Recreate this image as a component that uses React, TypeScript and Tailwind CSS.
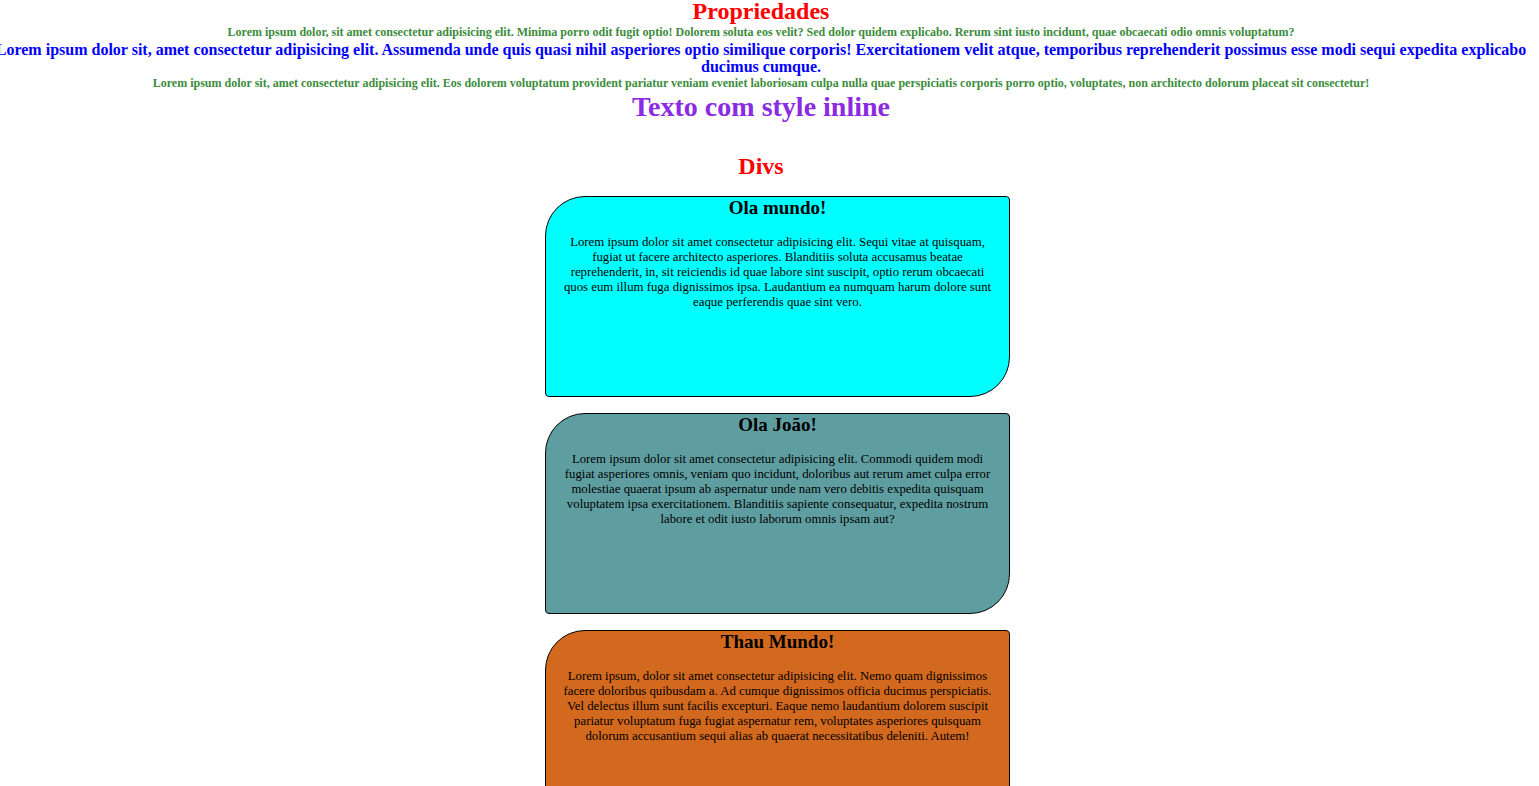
import React from "react";

const cards = [
  {
    title: "Ola mundo!",
    bg: "bg-[#00ffff]",
    text: "Lorem ipsum dolor sit amet consectetur adipisicing elit. Sequi vitae at quisquam, fugiat ut facere architecto asperiores. Blanditiis soluta accusamus beatae reprehenderit, in, sit reiciendis id quae labore sint suscipit, optio rerum obcaecati quos eum illum fuga dignissimos ipsa. Laudantium ea numquam harum dolore sunt eaque perferendis quae sint vero.",
  },
  {
    title: "Ola João!",
    bg: "bg-[#5f9ea0]",
    text: "Lorem ipsum dolor sit amet consectetur adipisicing elit. Commodi quidem modi fugiat asperiores omnis, veniam quo incidunt, doloribus aut rerum amet culpa error molestiae quaerat ipsum ab aspernatur unde nam vero debitis expedita quisquam voluptatem ipsa exercitationem. Blanditiis sapiente consequatur, expedita nostrum labore et odit iusto laborum omnis ipsam aut?",
  },
  {
    title: "Thau Mundo!",
    bg: "bg-[#d2691e]",
    text: "Lorem ipsum, dolor sit amet consectetur adipisicing elit. Nemo quam dignissimos facere doloribus quibusdam a. Ad cumque dignissimos officia ducimus perspiciatis. Vel delectus illum sunt facilis excepturi. Eaque nemo laudantium dolorem suscipit pariatur voluptatum fuga fugiat aspernatur rem, voluptates asperiores quisquam dolorum accusantium sequi alias ab quaerat necessitatibus deleniti. Autem!",
  },
];

export default function App() {
  return (
    <div className="bg-white text-black text-center font-['Liberation_Serif',serif] w-[1522px] min-h-[786px]">
      <h2 className="text-[24px] leading-[22px] font-bold text-[#ff0000]">Propriedades</h2>
      <p className="text-[12px] leading-[15px] font-bold text-[#3c8c3c] mt-[3px]">
        Lorem ipsum dolor, sit amet consectetur adipisicing elit. Minima porro odit fugit optio! Dolorem soluta eos velit? Sed dolor quidem explicabo. Rerum sint iusto incidunt, quae obcaecati odio omnis voluptatum?
      </p>
      <p className="text-[16px] leading-[17px] font-bold text-[#0000ff] mx-[-7px] mt-[1px]">
        Lorem ipsum dolor sit, amet consectetur adipisicing elit. Assumenda unde quis quasi nihil asperiores optio similique corporis! Exercitationem velit atque, temporibus reprehenderit possimus esse modi sequi expedita explicabo ducimus cumque.
      </p>
      <p className="text-[12px] leading-[15px] font-bold text-[#3c8c3c] mt-[1px]">
        Lorem ipsum dolor sit, amet consectetur adipisicing elit. Eos dolorem voluptatum provident pariatur veniam eveniet laboriosam culpa nulla quae perspiciatis corporis porro optio, voluptates, non architecto dolorum placeat sit consectetur!
      </p>
      <h1 className="text-[28px] leading-[32px] font-bold text-[#8a2be2]">Texto com style inline</h1>
      <h2 className="text-[24px] leading-[28px] font-bold text-[#ff0000] mt-[29px]">Divs</h2>
      <div className="flex flex-col items-center gap-[16px] mt-[16px] pl-[33px]">
        {cards.map((c) => (
          <div
            key={c.title}
            className={`${c.bg} w-[465px] h-[201px] border border-black rounded-tl-[40px] rounded-br-[40px] rounded-tr-[4px] rounded-bl-[4px] px-[14px]`}
          >
            <h3 className="text-[19px] leading-[22px] font-bold">{c.title}</h3>
            <p className="text-[12.8px] leading-[15px] mt-[16px]">{c.text}</p>
          </div>
        ))}
      </div>
    </div>
  );
}
